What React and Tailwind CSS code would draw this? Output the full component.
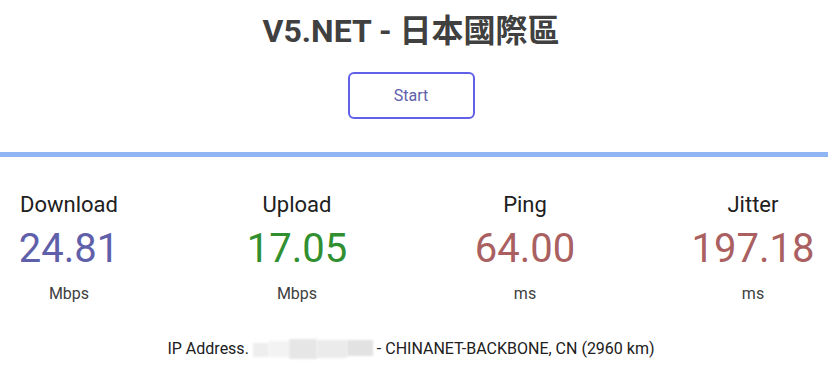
import React from "react";

const stats = [
  { label: "Download", value: "24.81", unit: "Mbps", color: "text-[#6060aa]" },
  { label: "Upload", value: "17.05", unit: "Mbps", color: "text-[#309030]" },
  { label: "Ping", value: "64.00", unit: "ms", color: "text-[#aa6060]" },
  { label: "Jitter", value: "197.18", unit: "ms", color: "text-[#aa6060]" },
];

const App = () => {
  return (
    <div className="w-[828px] h-[375px] bg-white overflow-hidden font-['Roboto','Noto_Sans_CJK_TC',sans-serif]">
      <div className="w-[822px]">
        <h1 className="pt-[12px] text-center text-[32px] leading-[38px] font-bold text-[#404040]">
          V5.NET - 日本國際區
        </h1>

        <div className="flex justify-center mt-[22px]">
          <button className="w-[127px] h-[47px] border-2 border-[#6060e8] rounded-[6px] text-[16px] text-[#6060aa]">
            Start
          </button>
        </div>
      </div>

      <div className="mt-[33px] h-[5px] bg-[#8fb5f5]" />

      <div className="w-[822px]">
        <div className="flex gap-[90px] mt-[34px]">
          {stats.map((s) => (
            <div key={s.label} className="w-[138px] flex flex-col items-center">
              <div className="text-[22px] leading-[28px] text-[#202020]">{s.label}</div>
              <div className={`mt-[6px] text-[40px] leading-[48px] ${s.color}`}>{s.value}</div>
              <div className="mt-[11px] text-[16px] leading-[20px] text-[#404040]">{s.unit}</div>
            </div>
          ))}
        </div>

        <div className="flex justify-center items-center mt-[35px] text-[16px] leading-[20px] text-[#202020]">
          <span>IP Address.</span>
          <span className="w-[120px] h-[20px] mx-[4px] flex">
            <span className="w-[16px] h-[14px] mt-[4px] bg-[#eeeeee] blur-[1px]" />
            <span className="w-[20px] h-[16px] mt-[2px] bg-[#f3f3f3] blur-[1px]" />
            <span className="w-[28px] h-[20px] bg-[#e6e6e6] blur-[1px]" />
            <span className="w-[30px] h-[18px] mt-[1px] bg-[#ebebeb] blur-[1px]" />
            <span className="w-[26px] h-[16px] mt-[1px] bg-[#e2e2e2] blur-[1px]" />
          </span>
          <span>- CHINANET-BACKBONE, CN (2960 km)</span>
        </div>
      </div>
    </div>
  );
};

export default App;
